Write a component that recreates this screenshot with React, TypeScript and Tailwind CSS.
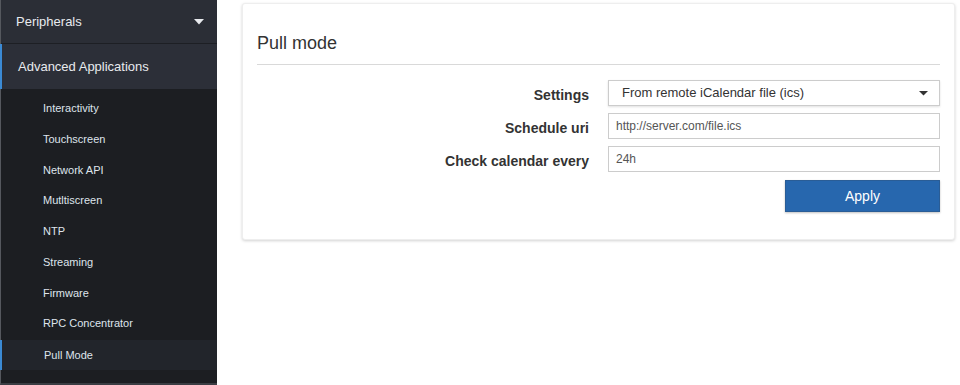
import React from "react";

const subItems = [
  "Interactivity",
  "Touchscreen",
  "Network API",
  "Mutltiscreen",
  "NTP",
  "Streaming",
  "Firmware",
  "RPC Concentrator",
  "Pull Mode",
];

export default function App() {
  return (
    <div
      className="flex w-[960px] h-[385px] bg-white overflow-hidden"
      style={{ fontFamily: '"Liberation Sans", Arial, sans-serif' }}
    >
      {/* Sidebar */}
      <div className="w-[217px] h-[385px] flex flex-col bg-[#1c1e22] border-l border-[#55585e] border-b-2 border-b-[#3a3d43] shrink-0">
        <div className="h-[44px] flex items-center justify-between pl-[15px] pr-[13px] bg-[#2b2e36] border-b border-[#1d1f24] text-[13px] text-[#e8eaee]">
          <span>Peripherals</span>
          <svg width="10" height="6" viewBox="0 0 10 6">
            <path d="M0 0 L10 0 L5 5.5 Z" fill="#e8eaee" />
          </svg>
        </div>
        <div className="h-[45px] flex items-center pl-[16px] bg-[#2c2f38] border-l-2 border-[#3b8ad4] -ml-px text-[13px] text-[#e8eaee]">
          Advanced Applications
        </div>
        <div className="flex flex-col pt-[4px]">
          {subItems.map((it) => {
            const active = it === "Pull Mode";
            return (
              <div
                key={it}
                className={
                  active
                    ? "h-[30px] mt-[1px] flex items-center pl-[42px] bg-[#22252b] border-l-2 border-[#3b8ad4] -ml-px text-[11px] text-[#dfe4ec]"
                    : "h-[30.75px] flex items-center pl-[42px] text-[11px] text-[#dfe4ec]"
                }
              >
                {it}
              </div>
            );
          })}
        </div>
      </div>

      {/* Main */}
      <div className="flex-1 pl-[25px] pr-[5px] pt-[3px]">
        <div className="h-[237px] bg-white rounded-[3px] shadow-[0_1px_3px_rgba(0,0,0,0.18)] border border-[#eeeeee] px-[14px] pt-[27px]">
          <div className="text-[18px] text-[#333333] leading-[24px] pb-[9px] border-b border-[#d9d9d9]">
            Pull mode
          </div>
          <div className="flex flex-col mt-[15px]">
            <div className="flex items-center h-[26px]">
              <div className="w-[351px] mt-[5px] text-right pr-[19px] text-[14px] font-bold text-[#333333]">
                Settings
              </div>
              <div className="flex-1 h-[26px] border border-[#cccccc] shadow-[0_1px_2px_rgba(0,0,0,0.12)] flex items-center justify-between pl-[13px] pr-[11px] text-[13px] text-[#333333]">
                <span>From remote iCalendar file (ics)</span>
                <svg width="9" height="5" viewBox="0 0 9 5">
                  <path d="M0 0 L9 0 L4.5 4.5 Z" fill="#333333" />
                </svg>
              </div>
            </div>
            <div className="flex items-center h-[26px] mt-[7px]">
              <div className="w-[351px] mt-[4px] text-right pr-[19px] text-[14px] font-bold text-[#333333]">
                Schedule uri
              </div>
              <div className="flex-1 h-[26px] border border-[#cccccc] flex items-center pl-[7px] text-[12px] text-[#555555]">
                http://server.com/file.ics
              </div>
            </div>
            <div className="flex items-center h-[26px] mt-[7px]">
              <div className="w-[351px] mt-[4px] text-right pr-[19px] text-[14px] font-bold text-[#333333]">
                Check calendar every
              </div>
              <div className="flex-1 h-[26px] border border-[#cccccc] flex items-center pl-[7px] text-[12px] text-[#555555]">
                24h
              </div>
            </div>
            <div className="flex justify-end mt-[8px]">
              <div className="w-[155px] h-[32px] bg-[#2767ae] border border-[#2a5d96] shadow-[0_1px_2px_rgba(0,0,0,0.25)] flex items-center justify-center text-[14px] text-white">
                Apply
              </div>
            </div>
          </div>
        </div>
      </div>
    </div>
  );
}
